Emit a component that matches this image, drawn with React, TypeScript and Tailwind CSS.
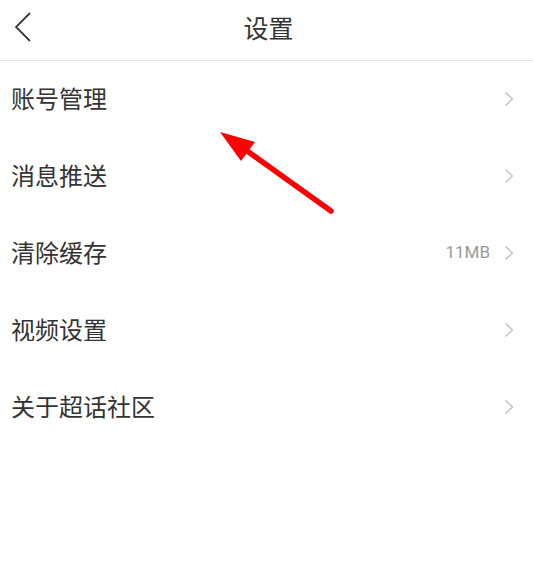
import React from "react";

const rows: { label: string; value?: string }[] = [
  { label: "账号管理" },
  { label: "消息推送" },
  { label: "清除缓存", value: "11MB" },
  { label: "视频设置" },
  { label: "关于超话社区" },
];

function Chevron() {
  return (
    <svg width="10" height="16" viewBox="0 0 10 16" className="shrink-0 -mt-[2px]">
      <path d="M1.5 1.5 L8.5 8 L1.5 14.5" fill="none" stroke="#bdbdbd" strokeWidth="1.3" />
    </svg>
  );
}

export default function App() {
  return (
    <div
      className="relative w-[533px] h-[565px] bg-white overflow-hidden"
      style={{ fontFamily: '"Noto Sans CJK SC", "Noto Sans", sans-serif' }}
    >
      <div className="relative h-[61px] border-b border-[#e6e6e6] flex items-center justify-center">
        <svg width="20" height="32" viewBox="0 0 20 32" className="absolute left-[13px] top-[11px]">
          <path d="M17 2 L3 16 L17 30" fill="none" stroke="#3a3a3a" strokeWidth="1.8" />
        </svg>
        <span className="text-[25px] leading-none text-[#333] ml-[4px] -mt-[5px]">设置</span>
      </div>
      <div className="flex flex-col">
        {rows.map((r) => (
          <div key={r.label} className="h-[77px] flex items-center pl-[11px] pr-[19px]">
            <span className="text-[24px] leading-none text-[#333] flex-1 -mt-[3px]">{r.label}</span>
            {r.value && (
              <span
                className="text-[17px] leading-none text-[#9a9a9a] mr-[14px] -mt-[2px]"
                style={{ fontFamily: 'Roboto, "Noto Sans", sans-serif' }}
              >
                {r.value}
              </span>
            )}
            <Chevron />
          </div>
        ))}
      </div>
      <svg
        width="533"
        height="565"
        viewBox="0 0 533 565"
        className="absolute left-0 top-0 pointer-events-none"
      >
        <line x1="331" y1="211" x2="243" y2="148" stroke="#ff0000" strokeWidth="5.5" strokeLinecap="round" />
        <polygon points="220,132 255,142 241,161" fill="#ff0000" />
      </svg>
    </div>
  );
}
